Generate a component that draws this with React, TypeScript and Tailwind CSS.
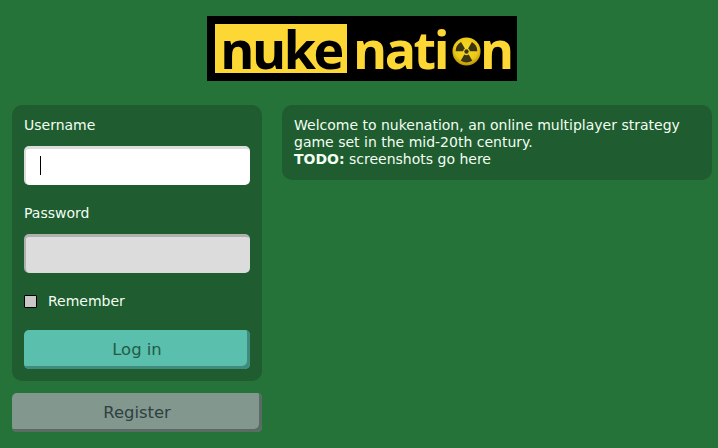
import React from 'react';

const RadiationIcon: React.FC = () => (
  <svg width="29" height="29" viewBox="0 0 32 32" className="shrink-0">
    <defs>
      <radialGradient id="coin" cx="50%" cy="40%" r="60%">
        <stop offset="0%" stopColor="#f5d92c" />
        <stop offset="70%" stopColor="#ecc814" />
        <stop offset="100%" stopColor="#b39408" />
      </radialGradient>
    </defs>
    <circle cx="16" cy="16" r="15.5" fill="url(#coin)" />
    <circle cx="16" cy="16" r="2.4" fill="#3a3410" />
    <g fill="#3a3410">
      <path d="M14.2 12.6 L10 5.6 A12 12 0 0 0 4 15.6 L12.2 15.6 A4 4 0 0 1 14.2 12.6 Z" />
      <path d="M17.8 12.6 L22 5.6 A12 12 0 0 1 28 15.6 L19.8 15.6 A4 4 0 0 0 17.8 12.6 Z" />
      <path d="M13.6 19.4 L9.6 26.2 A12 12 0 0 0 22.4 26.2 L18.4 19.4 A4.5 4.5 0 0 1 13.6 19.4 Z" />
    </g>
  </svg>
);

const Logo: React.FC = () => (
  <div className="w-[310px] h-[65px] bg-black pl-2 pt-2 flex items-start font-['Open_Sans',sans-serif] font-bold text-[52px] leading-[49px] tracking-[-2.5px]">
    <span className="w-[132px] h-[49px] shrink-0 bg-[#fdd835] text-black text-center">nuke</span>
    <span className="flex items-center h-[49px] shrink-0 pl-[6px] text-[#fdd835]">
      nati
      <span className="flex justify-center mt-[6px] ml-[5px] -mr-px"><RadiationIcon /></span>
      n
    </span>
  </div>
);

const LoginForm: React.FC = () => (
  <div className="flex flex-col w-[250px] shrink-0">
    <form className="bg-[#1f5c30] rounded-[10px] px-3 pt-3 pb-3 flex flex-col text-[14px] leading-[17px] text-[#f2fff2]">
      <label htmlFor="username" className="mb-3">Username</label>
      <div className="relative">
        <input
          id="username"
          className="block h-[39px] w-full rounded-[5px] bg-white border-t-[3px] border-l-[2px] border-[#dcdcdc] outline-none"
        />
        <span className="absolute left-[16px] top-[10px] h-[19px] w-px bg-black" />
      </div>
      <label htmlFor="password" className="mt-[20px] mb-3">Password</label>
      <input
        id="password"
        type="password"
        className="block h-[39px] w-full rounded-[5px] bg-[#dcdcdc] border-t-[3px] border-l-[2px] border-[#b0b0b0] outline-none"
      />
      <div className="flex items-center gap-[11px] mt-[20px] h-[17px]">
        <span className="w-[13px] h-[13px] bg-[#c8c8c8] border border-black rounded-[1px]" />
        <span>Remember</span>
      </div>
      <button
        type="button"
        className="mt-[20px] h-[39px] w-full rounded-[5px] bg-[#5abfad] shadow-[inset_-3px_-3px_0_#3f8c7e] text-[#1f5c48] text-[16.4px]"
      >
        Log in
      </button>
    </form>
    <button
      type="button"
      className="mt-3 h-[39px] w-full rounded-[5px] pt-px bg-[#82988f] shadow-[inset_-3px_-3px_0_#5a6b66] text-[#2f4040] text-[16.4px]"
    >
      Register
    </button>
  </div>
);

export default function App() {
  return (
    <div className="w-[718px] h-[448px] overflow-hidden bg-[#267339] font-['DejaVu_Sans',sans-serif]">
      <div className="w-[724px]">
        <header className="flex justify-center pt-4">
          <Logo />
        </header>
        <main className="flex items-start gap-5 px-3 mt-6">
          <LoginForm />
          <section className="flex-1 bg-[#1f5c30] rounded-[10px] px-3 py-3 text-[14px] leading-[17px] text-[#f2fff2]">
            Welcome to nukenation, an online multiplayer strategy game set in the mid-20th century.
            <br />
            <b>TODO:</b> screenshots go here
          </section>
        </main>
      </div>
    </div>
  );
}
